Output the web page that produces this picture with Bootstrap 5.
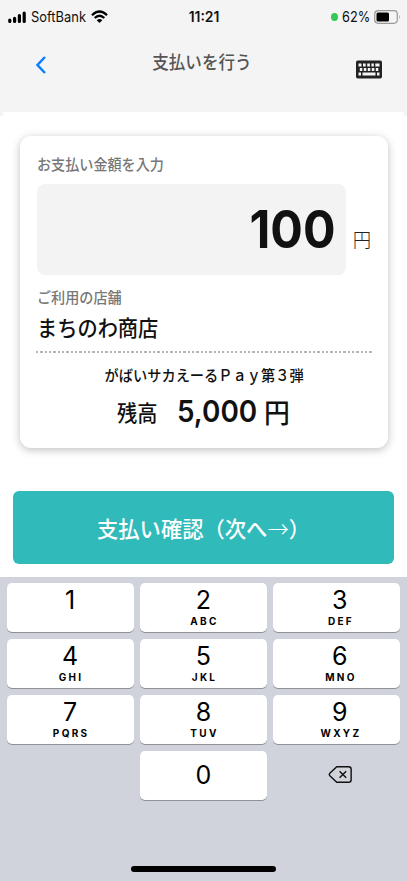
<!DOCTYPE html>
<html lang="ja">
<head>
<meta charset="utf-8">
<meta name="viewport" content="width=device-width, initial-scale=1">
<title>支払いを行う</title>
<link href="https://cdn.jsdelivr.net/npm/bootstrap@5.3.0/dist/css/bootstrap.min.css" rel="stylesheet">
<style>
body{font-family:Inter,"Noto Sans CJK JP",sans-serif;color:#111;background:#fff;overflow:hidden}
.screen{width:407px;height:881px;overflow:hidden}
.jp{font-family:"Noto Sans CJK JP",sans-serif;white-space:nowrap}
.squeeze{display:inline-block;transform:scaleX(.94);transform-origin:left center}
.squeeze-mid{display:inline-block;transform:scaleX(.93);transform-origin:center}
.topbar{height:112px;background:#f4f4f4}
.status{height:32px;color:#111;font-size:14.5px;line-height:33px;display:grid;grid-template-columns:1fr auto 1fr;padding:0 6px 0 8px}
.status .carrier{width:60px;margin-left:5px;transform:scaleX(.89);transform-origin:left center}
.status .clock{font-weight:600;transform:scaleX(.96);font-size:14.5px}
.status .pct{width:28px;margin:0 4px 0 4px;transform:scaleX(.88);transform-origin:left center}
.live-dot{width:7px;height:8px;border-radius:50%;background:#34c759}
.titlebar{height:80px;display:grid;grid-template-columns:10px 1fr 26px;padding:0 25px 0 36px}
.titlebar h1{font-size:18px;line-height:24px;font-weight:500;color:#555;margin:17px 0 0;padding-left:2px;text-align:center;transform:scaleX(.92)}
.kbd-icon{margin-top:28px}
.seam{height:4px;border:solid #f4f4f4;border-width:0 3px}
.pay-card{width:368px;height:312px;margin:20px 0 0 20px;border:0;border-radius:11px;box-shadow:0 2px 8px rgba(0,0,0,.25);padding:16px 16px 0 17px}
.field-label{font-size:15px;line-height:24px;height:24px;color:#777;font-weight:500}
.shop-label{margin-top:10px}
.amount-box{width:309px;height:91px;border-radius:8px;background:#f3f3f3;padding:0 10px 0 0}
.amount{font-size:52px;line-height:91px;font-weight:700;transform:scaleX(.93);transform-origin:right center}
.unit{font-size:20px;line-height:24px;font-weight:300;color:#222;margin:44px 0 0 6px;transform:scaleX(.92)}
.shop{font-size:21.5px;line-height:30px;height:30px;font-weight:500;margin-top:3px}
.dots{width:336px;height:2px;margin:9px 0 0 -1px;background:repeating-linear-gradient(90deg,#b5b5b5 0 2.3px,#fff 2.3px 4.33px)}
.coupon{font-size:15.3px;line-height:24px;font-weight:500;margin-top:9px;height:24px}
.balance{height:36px;margin:7px 0 0 80px;line-height:36px}
.balance .cap{font-size:21.5px;width:60px;font-weight:500;padding-top:1px}
.balance .sum{font-size:30px;font-weight:600;width:87px;transform:scaleX(.93);transform-origin:left center}
.balance .yen{font-size:27.5px;font-weight:500}
.confirm{width:381px;height:73px;margin:43px 0 0 13px;border:0;border-radius:6px;background:#31baba;color:#fff;font-size:21.3px;font-weight:500;padding:0;line-height:73px}
.confirm:hover{background:#2aa9a9;color:#fff}
.thin{font-weight:300}
.pad{height:304px;margin-top:13px;background:#d0d3db;padding:6px 7px 0 6.5px}
.keys{display:grid;grid-template-columns:repeat(3,127px);column-gap:6.4px;row-gap:7.6px;grid-auto-rows:48.5px}
.pad-key{border:0;border-radius:5px;background:#fff;box-shadow:0 1px 0 #8f9196;padding:2px 0 0;color:#000;display:flex;flex-direction:column;align-items:center}
.pad-key b{font-size:25px;font-weight:400;line-height:30px;height:30px}
.pad-key small{font-size:10px;font-weight:700;line-height:12px;letter-spacing:2.3px;margin-right:-2.3px}
.pad-key.right{padding-left:6px}
.pad-key.zero{justify-content:center;padding:0 0 1px}
.erase{padding:0 0 2px 7px}
.home-bar{width:145px;height:6px;border-radius:3px;background:#000;margin:66.5px auto 0}
</style>
<script src="https://cdn.jsdelivr.net/npm/bootstrap@5.3.0/dist/js/bootstrap.bundle.min.js"></script>
</head>
<body>
<div class="screen">
  <header class="topbar">
    <div class="status">
      <div class="d-flex align-items-center">
        <svg width="18" height="14" viewBox="0 0 18 14"><path d="M1.8 10v1.500M6.600 8.300v3.200M11.400 5.600v5.900M16.200 3v8.500" stroke="#000" stroke-width="3.200" stroke-linecap="round" fill="none"/></svg>
        <span class="carrier">SoftBank</span>
        <svg width="17" height="14" viewBox="0 0 17 14" fill="none" stroke="#000"><path d="M1 5.200Q8.500-2.200 16 5.200M3.700 8Q8.500 3.400 13.300 8" stroke-width="2.300"/><path d="M5.700 10.200Q8.500 8 11.300 10.200L8.500 13z" fill="#000" stroke="none"/></svg>
      </div>
      <span class="clock">11:21</span>
      <div class="d-flex align-items-center justify-content-end">
        <i class="live-dot"></i><span class="pct">62%</span>
        <svg width="27" height="14" viewBox="0 0 27 14"><rect x=".7" y=".7" width="22.600" height="12.600" rx="3.500" fill="none" stroke="#999" stroke-width="1.200"/><rect x="2.500" y="2.500" width="12.500" height="9" rx="1.500" fill="#000"/><path d="M25 4.800q1.600 2.200 0 4.400z" fill="#999"/></svg>
      </div>
    </div>
    <div class="titlebar">
      <svg class="mt-4" width="10" height="18" viewBox="0 0 10 18"><path d="M9 1 1.500 9 9 17" fill="none" stroke="#087fff" stroke-width="2.500"/></svg>
      <h1 class="jp">支払いを行う</h1>
      <svg class="kbd-icon" width="26" height="19" viewBox="0 0 26 19"><rect y=".5" width="26" height="18" rx="1.800" fill="#222"/><path d="M2.500 5h3M7 5h2.700M11.200 5h2.700M15.400 5h2.400M19.300 5h4.200M3.800 9.500h2.500M7.800 9.500h2.500M11.800 9.500h2.500M15.800 9.500h2.500M19.800 9.500h2.500M2.500 14h2.500M6.500 14h13M21 14h2.500" stroke="#f4f4f4" stroke-width="2.800"/></svg>
    </div>
  </header>
  <div class="seam"></div>

  <main>
    <section class="card pay-card">
      <div class="field-label jp"><span class="squeeze">お支払い金額を入力</span></div>
      <div class="d-flex mt-2">
        <div class="amount-box d-flex justify-content-end"><span class="amount">100</span></div>
        <span class="unit jp">円</span>
      </div>
      <div class="field-label shop-label jp"><span class="squeeze">ご利用の店舗</span></div>
      <div class="shop jp"><span class="squeeze">まちのわ商店</span></div>
      <div class="dots"></div>
      <div class="coupon jp text-center"><span class="squeeze-mid">がばいサカえーるＰａｙ第３弾</span></div>
      <div class="balance d-flex">
        <span class="cap jp"><span class="squeeze">残高</span></span>
        <span class="sum">5,000</span>
        <span class="yen jp"><span class="squeeze">円</span></span>
      </div>
    </section>
    <button class="btn confirm jp" type="button">支払い確認（次へ<span class="thin">→</span>）</button>
  </main>

  <footer class="pad">
    <div class="keys">
      <button class="pad-key"><b>1</b></button>
      <button class="pad-key"><b>2</b><small>ABC</small></button>
      <button class="pad-key right"><b>3</b><small>DEF</small></button>
      <button class="pad-key"><b>4</b><small>GHI</small></button>
      <button class="pad-key"><b>5</b><small>JKL</small></button>
      <button class="pad-key right"><b>6</b><small>MNO</small></button>
      <button class="pad-key"><b>7</b><small>PQRS</small></button>
      <button class="pad-key"><b>8</b><small>TUV</small></button>
      <button class="pad-key right"><b>9</b><small>WXYZ</small></button>
      <span></span>
      <button class="pad-key zero"><b>0</b></button>
      <div class="erase d-flex justify-content-center align-items-center">
        <svg width="25" height="19" viewBox="0 0 26 20" fill="none" stroke="#111" stroke-width="1.500" stroke-linejoin="round"><path d="M9 1.800H21.500Q24.200 1.800 24.200 4.500V15.500Q24.200 18.200 21.500 18.200H9L1.500 11Q.8 10 1.500 9z"/><path d="m12 6.500 7 7m0-7-7 7"/></svg>
      </div>
    </div>
    <div class="home-bar"></div>
  </footer>
</div>
</body>
</html>
